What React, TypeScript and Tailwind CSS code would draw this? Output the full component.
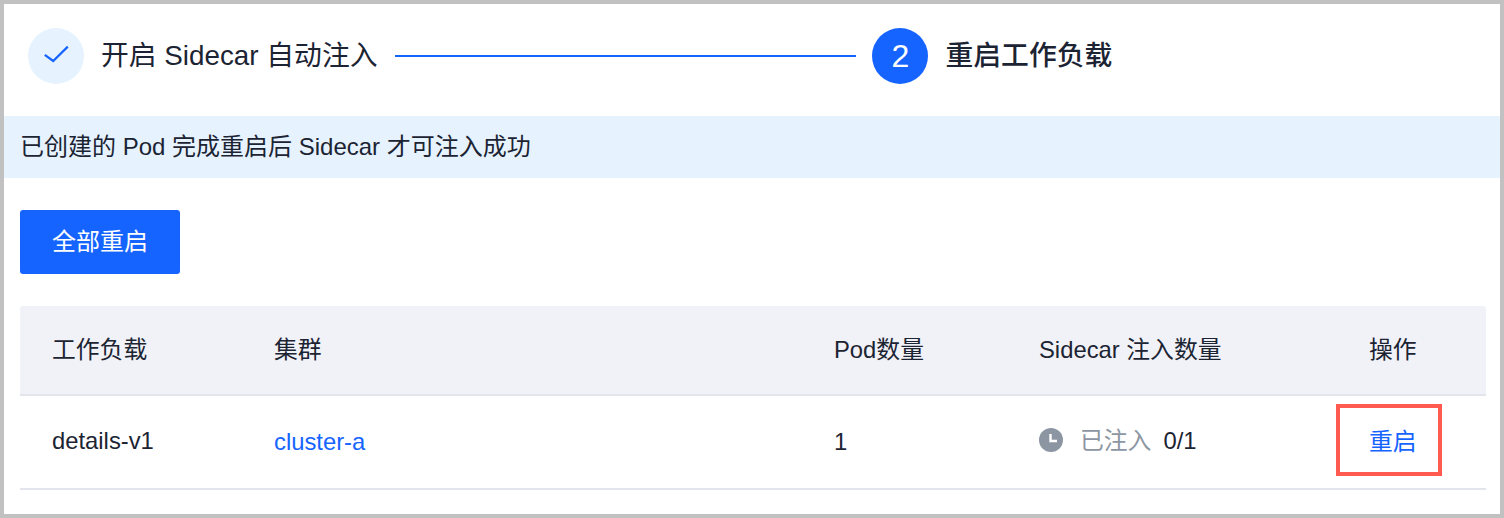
const FONT = "font-['Liberation_Sans','Noto_Sans_CJK_SC',sans-serif]";
const COLS = "grid grid-cols-[222px_560px_205px_331px_148px]";

function CheckIcon() {
  return (
    <svg width="32" height="32" viewBox="0 0 32 32" fill="none" stroke="#1664ff" strokeWidth="2.2">
      <path d="M4.8 14.8L13.2 21L27.8 6.6" />
    </svg>
  );
}

function ClockIcon() {
  return (
    <svg width="24" height="24" viewBox="0 0 24 24" className="-mt-0.5 shrink-0">
      <circle cx="12" cy="12" r="12" fill="#8c96a3" />
      <path d="M11.5 6V13H18" fill="none" stroke="#fff" strokeWidth="2.4" />
    </svg>
  );
}

export default function App() {
  return (
    <div className={`${FONT} h-[518px] w-[1504px] border-4 border-[#c1c1c1] bg-white text-[#1c2433]`}>
      <div className="mb-2 flex h-[104px] items-center pl-6">
        <div className="flex h-14 w-14 items-center justify-center rounded-full bg-[#e6f3ff]">
          <CheckIcon />
        </div>
        <span className="ml-[17px] text-[27.8px] leading-8">开启 Sidecar 自动注入</span>
        <div className="ml-[18px] h-0.5 w-[461px] bg-[#1664ff]" />
        <div className="ml-[16px] flex h-14 w-14 items-center justify-center rounded-full bg-[#1664ff] text-[32px] text-white">
          2
        </div>
        <span className="ml-[17px] text-[27.8px] font-medium leading-8">重启工作负载</span>
      </div>

      <div className="flex h-[62px] items-center bg-[#e6f3ff] px-4 text-[24px]">
        已创建的 Pod 完成重启后 Sidecar 才可注入成功
      </div>

      <div className="px-4 pt-8">
        <button
          type="button"
          className="h-16 w-40 rounded-[3px] bg-[#1664ff] text-[24px] text-white"
        >
          全部重启
        </button>

        <div className="mt-8 w-[1466px]">
          <div className={`${COLS} h-[90px] items-center rounded-t-[3px] border-b-2 border-[#e2e6ec] bg-[#f0f2f7] text-[23.8px]`}>
            <div className="pl-8 pb-px">工作负载</div>
            <div className="pl-8 pb-px">集群</div>
            <div className="pl-8 pb-px">Pod数量</div>
            <div className="pl-8 pb-px">Sidecar 注入数量</div>
            <div className="pl-[31px] pb-px">操作</div>
          </div>
          <div className={`${COLS} relative h-[94px] items-center border-b-2 border-[#e2e6ec] text-[23.8px]`}>
            <div className="pb-0.5 pl-8">details-v1</div>
            <div className="pl-8 text-[#1664ff]">cluster-a</div>
            <div className="pl-8">1</div>
            <div className="flex items-center pb-0.5 pl-8">
              <ClockIcon />
              <span className="ml-[17px] text-[#8c96a3]">已注入</span>
              <span className="ml-3">0/1</span>
            </div>
            <div className="pl-[31px] text-[#1664ff]">重启</div>
            <div className="absolute left-[1316px] top-[8px] h-[72px] w-[106px] border-4 border-[#ff5a4f]" />
          </div>
        </div>
      </div>
    </div>
  );
}
